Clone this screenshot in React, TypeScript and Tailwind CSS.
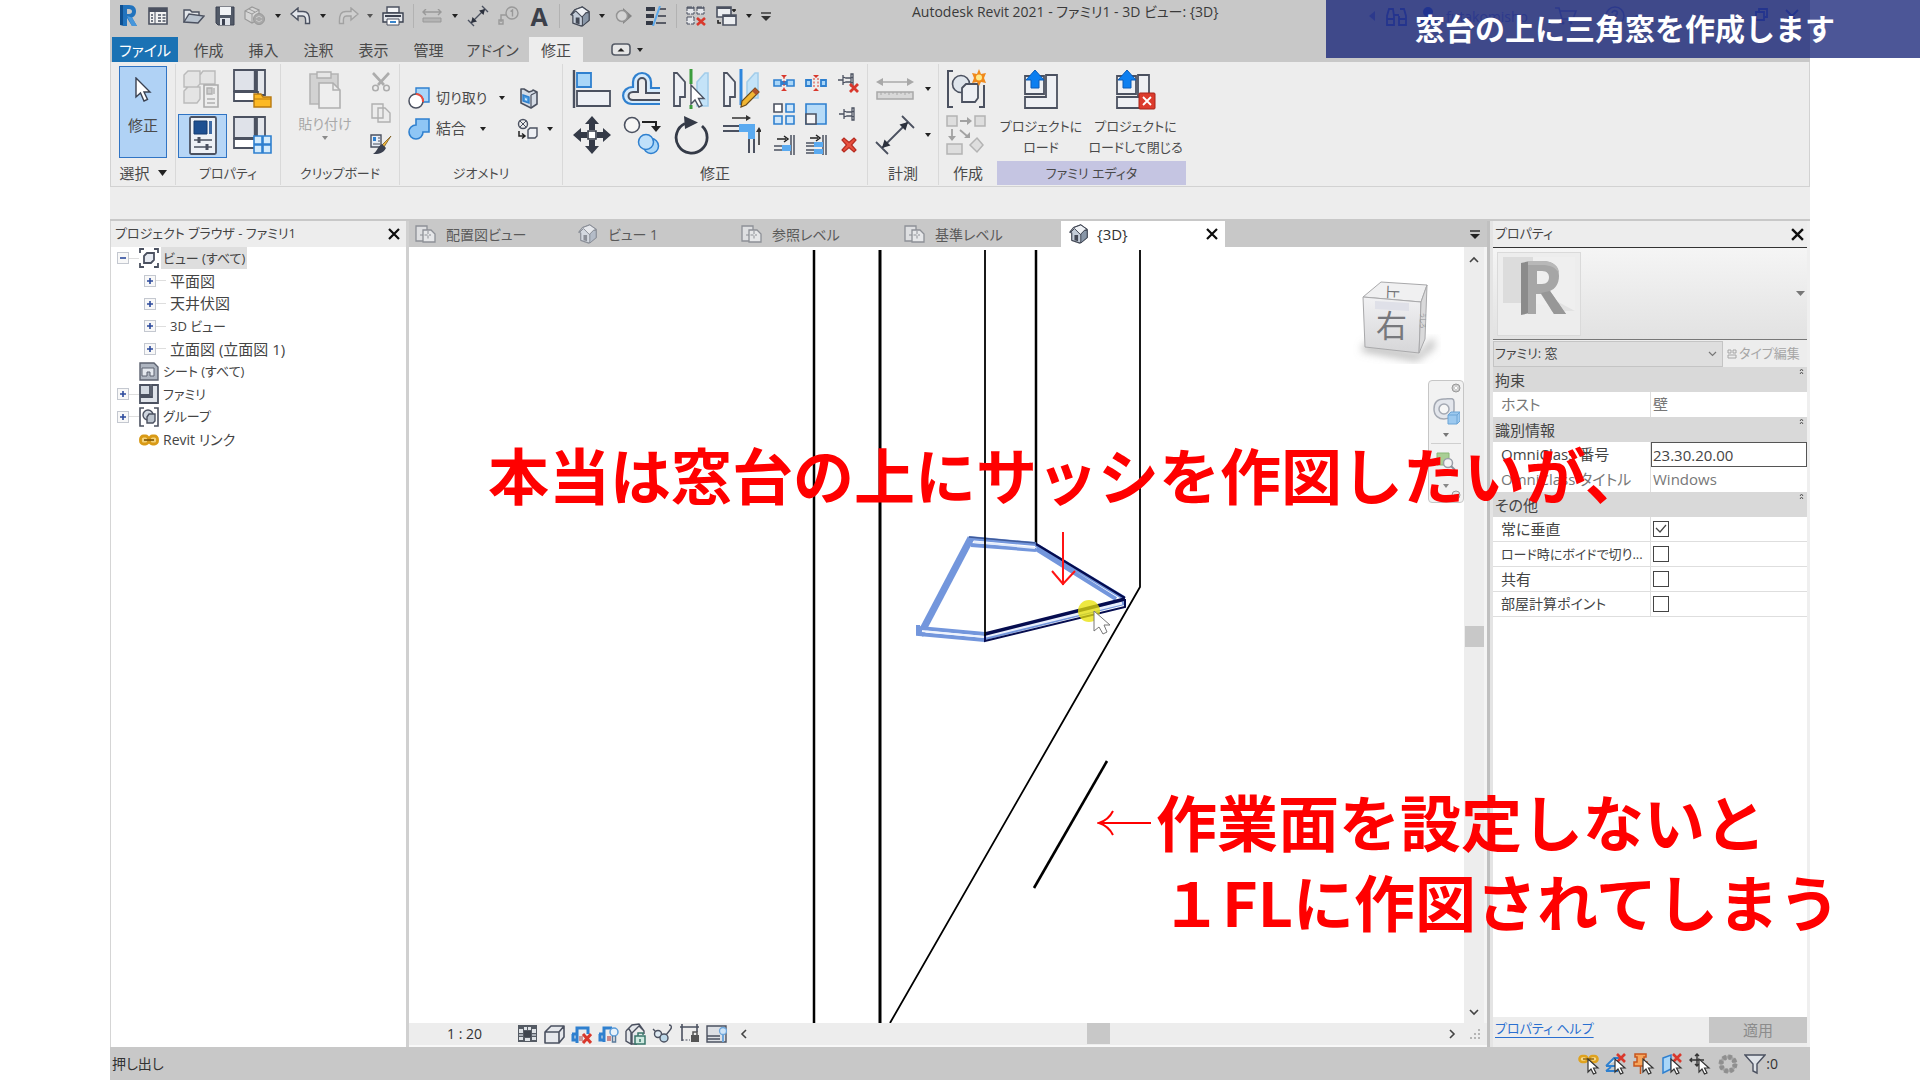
import React from "react";

type P = { children?: React.ReactNode };

const D = "#4b5160";
const F = "#eef0f4";
const B = "#2f80cf";
const LB = "#a9d6f8";

function Icon({ s = 40, w, h, children }: P & { s?: number; w?: number; h?: number }) {
  const ww = w ?? s;
  const hh = h ?? s;
  return (
    <svg width={ww} height={hh} viewBox={`0 0 ${ww} ${hh}`} fill="none" className="shrink-0" aria-hidden="true">
      {children}
    </svg>
  );
}

function Caret({ c = "#222" }: { c?: string }) {
  return (
    <svg width="6" height="4" viewBox="0 0 6 4" className="shrink-0" aria-hidden="true">
      <path d="M0 0h6L3 4z" fill={c} />
    </svg>
  );
}

function CaretBtn({ className = "", label, c }: { className?: string; label: string; c?: string }) {
  return (
    <button aria-label={label} className={`flex h-8 w-4 items-center justify-center ${className}`}>
      <Caret c={c} />
    </button>
  );
}

function Q({ label, className = "", children }: P & { label: string; className?: string }) {
  return (
    <button aria-label={label} className={`flex h-8 w-7 shrink-0 items-center justify-center ${className}`}>
      {children}
    </button>
  );
}

function House({ s = 22, mute = false }: { s?: number; mute?: boolean }) {
  const k = mute ? "#8b8f98" : "#434956";
  return (
    <svg width={s} height={s} viewBox="0 0 22 22" aria-hidden="true" strokeLinejoin="round" className="shrink-0">
      <path d="M1 9l4-5 8-3 7 5v9l-8 6-9-3V10z" fill={mute ? "#d3d8e0" : "#c3ccd8"} stroke={k} strokeWidth="1.3" />
      <path d="M1 9l4-5 8-3 7 5-3 1-4 5-7-7-4 4z" fill={mute ? "#e6e8ec" : "#eef1f5"} stroke={k} strokeWidth="1.1" />
      <path d="M13 11l4-4 3 0v8l-7 6z" fill={mute ? "#b4bcc8" : "#8997a8"} stroke={k} strokeWidth="1.1" />
      <path d="M6 12h4v7l-4-1z" fill={k} />
    </svg>
  );
}

function PlanIcon() {
  return (
    <Icon w={21} h={20}>
      <path d="M1 2h11v15H1z" fill="#dedfe1" stroke="#8d9096" strokeWidth="1.3" />
      <path d="M8 6h8l4 4v8H8z" fill="#e6e7e9" stroke="#8d9096" strokeWidth="1.3" />
      <path d="M5 11h11M13 7v9" stroke="#8d9096" strokeDasharray="3 1.5" />
    </Icon>
  );
}

function CloseX({ s = 12, w = 2.2 }: { s?: number; w?: number }) {
  return (
    <svg width={s} height={s} viewBox="0 0 12 12" aria-hidden="true">
      <path d="M1 1l10 10M11 1L1 11" stroke="#0d0d0d" strokeWidth={w} />
    </svg>
  );
}

function QuickAccess() {
  const sep = "h-6 w-px shrink-0 bg-[#b2b2b2]";
  return (
    <div className="flex h-[37px] items-start bg-[#c8c8c8] text-[14px] text-[#3a3a3a]">
      <Q label="Revit メニュー" className="ml-0.5 w-8">
        <Icon w={20} h={24}>
          <path d="M2 1h4v21l-4-1z" fill="#0f4f8f" />
          <path d="M5 1h6c5 0 7 3 7 6 0 4-2 6-4 6.500L19 22h-5l-5-8v8H5zM9 5v5h2c2 0 3-1 3-2.500S13 5 11 5z" fill="#2273bd" fillRule="evenodd" />
          <path d="M9 12l5 10h5l-5-8.500z" fill="#4796db" />
        </Icon>
      </Q>
      <Q label="ホーム">
        <Icon w={20} h={18}>
          <path d="M1 1h18v16H1z" fill="#f2f2f2" stroke={D} strokeWidth="1.6" />
          <path d="M1 1h18v4H1z" fill={D} />
          <path d="M7 5v12" stroke={D} />
          <path d="M3 8h2M3 11h2M3 14h2M10 8h3M10 11h3M10 14h3M14.500 8h3M14.500 11h3M14.500 14h3" stroke={D} strokeWidth="1.4" />
        </Icon>
      </Q>
      <Q label="開く" className="ml-2">
        <Icon w={22} h={18}>
          <path d="M1 15V3h6l2 2h7v4" fill="#e3e6ea" stroke={D} strokeWidth="1.4" />
          <path d="M1 15l5-8 15 2-6 7z" fill="#b9c3cf" stroke={D} strokeWidth="1.4" />
        </Icon>
      </Q>
      <Q label="保存" className="ml-[3px]">
        <Icon w={20} h={20}>
          <path d="M1 1h18v18H3l-2-2z" fill="#525a68" stroke="#3b4150" />
          <path d="M5 1h11v8H5z" fill="#f1f3f6" />
          <path d="M5 12h10v7H5z" fill="#dfe3ea" />
          <path d="M7 13h3v6H7z" fill="#3b4150" />
        </Icon>
      </Q>
      <Q label="同期" className="ml-0.5">
        <Icon w={22} h={20}>
          <path d="M1 5l7-4 7 3v9l-7 4-7-4z" fill="#d5d5d5" stroke="#999" strokeWidth="1.2" />
          <path d="M1 5l7 3 7-4M8 8v9M5 3l6 3" stroke="#999" />
          <circle cx="15" cy="13" r="5.5" fill="#a8a8a8" stroke="#999" />
          <path d="M12 12l3-2 3 2M18 14l-3 2-3-2" stroke="#ccc" />
        </Icon>
      </Q>
      <CaretBtn label="同期のオプション" className="ml-px" />
      <Q label="元に戻す" className="ml-px">
        <Icon w={22} h={18}>
          <path d="M1 7l7-6v3.500h5c5 0 7 3 6.500 12h-4c.5-6-.5-7.500-3-7.500H8V13z" fill="#e2e5ea" stroke={D} strokeWidth="1.4" />
        </Icon>
      </Q>
      <CaretBtn label="元に戻す履歴" />
      <Q label="やり直し" className="ml-[3px]">
        <Icon w={22} h={18}>
          <path d="M21 7l-7-6v3.500H9C4 4.500 2 7.500 2.500 16.500h4C6 10.500 7 9 9.500 9H14v4z" fill="#cfcfcf" stroke="#a2a2a2" strokeWidth="1.4" />
        </Icon>
      </Q>
      <CaretBtn label="やり直し履歴" c="#555" />
      <Q label="印刷" className="ml-px">
        <Icon w={22} h={20}>
          <path d="M5 1h12v6H5z" fill="#f4f5f7" stroke={D} strokeWidth="1.4" />
          <path d="M1 7h20v9H1z" fill="#e3e6ea" stroke="#3b4150" strokeWidth="1.4" />
          <path d="M3 9h16v2H3z" fill="#3b4150" />
          <path d="M5 13h12v6H5z" fill="#fff" stroke={D} />
          <path d="M8 16h6" stroke="#3a86cc" strokeWidth="2" />
        </Icon>
      </Q>
      <span className={`ml-1.5 mt-1 ${sep}`} />
      <Q label="計測" className="ml-1">
        <Icon w={20} h={14}>
          <path d="M1 3h18M4 0L1 3l3 3M16 0l3 3-3 3" stroke="#999" strokeWidth="1.4" />
          <path d="M1 9h18v4H1z" fill="#b4b4b4" stroke="#999" />
        </Icon>
      </Q>
      <CaretBtn label="計測のオプション" className="ml-px" />
      <Q label="平行寸法" className="ml-px">
        <Icon w={22} h={22}>
          <path d="M4 18L18 4M1 15l6 6M15 1l6 6" stroke={D} strokeWidth="1.4" />
          <path d="M4 18l1.500-6 4.500 4.500zM18 4l-6 1.500 4.500 4.500z" fill="#2c313d" />
        </Icon>
      </Q>
      <Q label="タグ" className="ml-[3px]">
        <Icon w={22} h={20}>
          <circle cx="14" cy="7" r="6" stroke="#999" strokeWidth="1.4" />
          <path d="M12.500 5.500l2-1.500v6.500M8 9H3v7M1 14h4v4H1z" stroke="#999" strokeWidth="1.4" />
        </Icon>
      </Q>
      <Q label="文字" className="ml-0.5">
        <span className="font-['Open_Sans',sans-serif] text-[25px] font-bold leading-8 text-[#3c404a]">A</span>
      </Q>
      <span className={`ml-1.5 mt-1 ${sep}`} />
      <Q label="既定の 3D ビュー" className="ml-1.5"><House s={21} /></Q>
      <CaretBtn label="3D ビューのオプション" />
      <Q label="断面">
        <Icon w={18} h={16}>
          <path d="M8 0l9 8-9 8z" fill="#858585" />
          <circle cx="7" cy="8" r="5.5" fill="#d4d4d4" stroke="#959595" strokeWidth="1.5" />
        </Icon>
      </Q>
      <Q label="細線" className="ml-1">
        <Icon w={22} h={20}>
          <path d="M1 3h9M1 10h8M1 17h7" stroke="#343945" strokeWidth="4" />
          <path d="M14 3h7M13 10h8M11 17h10" stroke="#343945" strokeWidth="1.4" />
          <path d="M15 0L8 20" stroke="#5aa8ec" strokeWidth="2" />
        </Icon>
      </Q>
      <span className={`ml-1.5 mt-1 ${sep}`} />
      <Q label="非表示を閉じる" className="ml-[5px]">
        <Icon w={20} h={20}>
          <path d="M1 1h7v7H1zM11 1h7v7h-7zM1 11h7v7H1z" fill="#e4e6ea" stroke={D} strokeDasharray="5 1" />
          <path d="M1 2h7M11 2h7" stroke={D} strokeWidth="1.6" />
          <path d="M11 12l8 7M19 12l-8 7" stroke="#d9382c" strokeWidth="2.6" />
        </Icon>
      </Q>
      <Q label="ウィンドウ切り替え" className="ml-[3px]">
        <Icon w={22} h={20}>
          <path d="M1 1h14v10H1z" fill="#eceef1" stroke={D} strokeWidth="1.6" />
          <path d="M7 9h13v10H7z" fill="#eceef1" stroke={D} strokeWidth="1.6" />
          <path d="M7 10h13M1 2h14" stroke={D} strokeWidth="2" />
          <path d="M18 6V3M16 4h4M2 14v3h3" stroke="#222" strokeWidth="1.6" />
        </Icon>
      </Q>
      <CaretBtn label="ウィンドウ一覧" />
      <button aria-label="クイック アクセスのカスタマイズ" className="ml-px flex h-8 w-4 items-center justify-center">
        <Icon w={10} h={9}>
          <path d="M0 1h10" stroke="#333" strokeWidth="1.4" />
          <path d="M0 4h10L5 9z" fill="#333" />
        </Icon>
      </button>
      <h1 className="ml-[138px] whitespace-nowrap leading-6">Autodesk Revit 2021 - ファミリ1 - 3D ビュー: {"{3D}"}</h1>
      <div className="ml-auto flex h-8 items-center text-[#7a86d0]">
        <Icon w={8} h={10}><path d="M7 0v10L1 5z" fill="#7a86d0" /></Icon>
        <Icon w={40} h={20}>
          <path d="M13 3h4l1 7v9h-7v-9zM24 3h4l2 7v9h-7v-9M18 9h5M11 13h7M23 13h7" stroke="#5870d8" strokeWidth="1.8" />
        </Icon>
        <Icon w={26} h={20}>
          <circle cx="12" cy="6" r="5" fill="#4a6fe0" />
          <path d="M3 18c2-5 4-7 9-7s7 2 9 7z" fill="#4a6fe0" />
        </Icon>
        <span className="w-[112px] pl-1">futakomisho</span>
        <Icon w={50} h={20}>
          <path d="M1 2h4l3 11h11l3-8H6" stroke="#7a86d0" strokeWidth="1.6" />
          <circle cx="9" cy="17" r="1.5" fill="#7a86d0" /><circle cx="17" cy="17" r="1.5" fill="#7a86d0" />
        </Icon>
        <Icon w={148} h={22}>
          <circle cx="11" cy="11" r="9" stroke="#7a86d0" strokeWidth="1.6" />
          <path d="M8 8c1-4 7-2 5 1-1 1-2 1.500-2 4M11 15v2" stroke="#7a86d0" strokeWidth="1.8" />
          <path d="M31 10h7l-3.500 4z" fill="#7a86d0" />
        </Icon>
        <Icon w={58} h={18}>
          <path d="M4 5h8v8H4zM7 5V2h8v8h-3M34 3l12 12M46 3L34 15" stroke="#5870d8" strokeWidth="1.8" />
        </Icon>
      </div>
    </div>
  );
}

function RibbonTabs() {
  const t = "h-[25px] w-[55px] text-center";
  return (
    <nav aria-label="リボン" className="flex h-[25px] bg-[#c8c8c8] pl-0.5 text-[15px] leading-[26px] text-[#4a4a4a]">
      <button className="h-[25px] w-[66px] bg-[#1a72b4] text-white">ファイル</button>
      <span className="w-[3px]" />
      <button className={t}>作成</button>
      <button className={t}>挿入</button>
      <button className={t}>注釈</button>
      <button className={t}>表示</button>
      <button className={t}>管理</button>
      <button className="h-[25px] w-[73px] text-center">アドイン</button>
      <button aria-current="page" className="h-[25px] w-[54px] bg-[#ededed] text-center">修正</button>
      <button aria-label="リボンを最小化" className="ml-7 flex items-center gap-1.5">
        <Icon w={20} h={13}>
          <rect x="1" y="1" width="18" height="11" rx="3" fill="#e6e6e6" stroke="#555b66" strokeWidth="1.6" />
          <path d="M6.500 8.500h7L10 5z" fill="#222" />
        </Icon>
        <Caret />
      </button>
    </nav>
  );
}

function Panel({ label, className = "", footer = "text-[15px]", children }: P & { label: React.ReactNode; className?: string; footer?: string }) {
  return (
    <section className={`flex h-[121px] shrink-0 flex-col ${className}`}>
      <div className="h-[97px]">{children}</div>
      <div className={`h-6 text-center leading-6 ${footer}`}>{label}</div>
    </section>
  );
}

function Boxes({ children }: P) {
  return (
    <Icon s={40}>
      <path d="M1 1h22v21H1z" fill="#dfe2e9" stroke={D} strokeWidth="1.8" />
      <path d="M24 1h8v25h-8z" fill="#e4e7ec" stroke={D} strokeWidth="1.8" />
      <path d="M1 23h24v9H1z" fill="#fff" stroke={D} strokeWidth="1.8" />
      <path d="M22 1v21" stroke={D} strokeWidth="2.4" />
      {children}
    </Icon>
  );
}

function Tool({ label, children }: P & { label: string }) {
  return <button aria-label={label} className="flex items-center justify-center">{children}</button>;
}

function Ribbon() {
  const rb = "border-r border-[#d9d9d9]";
  return (
    <div className="flex h-[125px] border border-t-0 border-[#d2d2d2] bg-[#ededed] pt-[2px] text-[15px] text-[#4a4a4a]">
      <Panel className={`w-[65px] ${rb}`} label={<span className="inline-flex items-center gap-2">選択 <Icon w={9} h={6}><path d="M0 0h9L4.500 6z" fill="#222" /></Icon></span>}>
        <button className="ml-2 mt-0.5 flex h-[92px] w-12 flex-col items-center border border-[#3074c4] bg-[#b0d2f5]">
          <span className="mt-2.5">
            <Icon w={20} h={28}>
              <path d="M3 1v19l4.500-4 3.500 8 3.500-1.500-3.500-7.500h6z" fill="#fff" stroke="#3a4150" strokeWidth="1.4" />
            </Icon>
          </span>
          <span className="mt-2 leading-6">修正</span>
        </button>
      </Panel>
      <Panel className={`w-[105px] ${rb}`} footer="text-[13px]" label="プロパティ">
        <div className="grid h-[96px] grid-cols-2 pl-px pr-0.5 pt-0.5">
          <Tool label="タイプ プロパティ">
            <Icon s={40}>
              <path d="M2 6l4-4h12v13l-3 3H2zM18 6l3-4h12v13h-15zM2 22l4-4h12v12l-3 4H2z" fill="#e4e4e4" stroke="#bababa" strokeWidth="1.4" />
              <path d="M22 16h14v22H22z" fill="#ededed" stroke="#ababab" strokeWidth="1.6" />
              <path d="M25 19h5v6h-5zM32 19v6M25 30h8M25 34h8" fill="#ccc" stroke="#b0b0b0" strokeWidth="1.4" />
            </Icon>
          </Tool>
          <Tool label="ファミリ カテゴリ">
            <Boxes>
              <path d="M21 27V25h7l2 3h8v10H21z" fill="#fdb924" stroke="#b87a10" strokeWidth="1.4" />
              <path d="M21 30h17" stroke="#b87a10" />
            </Boxes>
          </Tool>
          <button aria-label="プロパティ" className="ml-px flex h-11 w-[49px] items-center justify-center self-center border border-[#3074c4] bg-[#b7d6f6]">
            <Icon w={28} h={40}>
              <rect x="1" y="1" width="26" height="37" rx="1.5" fill="#eef1f6" stroke={D} strokeWidth="1.8" />
              <path d="M5 5h13v13H5z" fill="#1d4f91" stroke="#143a6e" />
              <path d="M20 5h3v13h-3z" fill="#3f6ba6" />
              <path d="M5 24h18M5 31h18" stroke={D} strokeWidth="1.6" />
              <path d="M10 21v6M18 28v6" stroke={D} strokeWidth="3" />
            </Icon>
          </button>
          <Tool label="ファミリ タイプ">
            <Boxes>
              <path d="M21 20h8v8h-8zM30 20h8v8h-8zM21 29h8v8h-8zM30 29h8v8h-8z" fill="#d3ebfc" stroke={B} strokeWidth="1.6" />
            </Boxes>
          </Tool>
        </div>
      </Panel>
      <Panel className={`w-[119px] ${rb}`} footer="text-[13px]" label="クリップボード">
        <div className="flex">
          <button className="ml-4 flex w-14 flex-col items-center pt-1.5 text-[14px] text-[#a9a9a9]">
            <Icon w={34} h={40}>
              <path d="M2 4h28v30H2z" fill="#d2d2d2" stroke="#b5b5b5" strokeWidth="1.6" />
              <path d="M9 2h14v6H9z" fill="#e6e6e6" stroke="#b0b0b0" strokeWidth="1.4" />
              <path d="M11 13h14l7 7v18H11z" fill="#eeeeee" stroke="#b0b0b0" strokeWidth="1.6" />
              <path d="M25 13v7h7" stroke="#b0b0b0" strokeWidth="1.4" />
            </Icon>
            <span className="mt-0.5 whitespace-nowrap leading-6">貼り付け</span>
            <Caret c="#8a8a8a" />
          </button>
          <div className="ml-4 grid h-[96px] w-6 grid-rows-3 pt-0.5">
            <Tool label="切り取り">
              <Icon w={20} h={20}>
                <path d="M2 1l11 12M18 1L7 13" stroke="#adadad" strokeWidth="2.6" />
                <circle cx="4.5" cy="16" r="2.8" stroke="#adadad" strokeWidth="1.5" /><circle cx="15.5" cy="16" r="2.8" stroke="#adadad" strokeWidth="1.5" />
              </Icon>
            </Tool>
            <Tool label="コピー">
              <Icon w={22} h={22}>
                <path d="M2 2h11v14H2zM8 6h7l5 5v9H8z" fill="#ececec" stroke="#b0b0b0" strokeWidth="1.4" />
              </Icon>
            </Tool>
            <Tool label="タイプのプロパティの一致">
              <Icon w={22} h={22}>
                <path d="M1 2h10v12H1z" fill="#e8eef6" stroke={D} strokeWidth="1.4" />
                <path d="M3 4h3v4H3z" fill={B} /><path d="M8 5h2M8 8h2M3 11h7" stroke={D} />
                <path d="M21 3l-9 9 2 2z" fill="#f0b840" stroke="#7a5a20" strokeWidth=".8" />
                <path d="M12 11l4 4c-3 6-8 6-13 6 4-2 4-7 9-10z" fill="#3b4150" />
              </Icon>
            </Tool>
          </div>
        </div>
      </Panel>
      <Panel className={`w-[163px] ${rb}`} footer="text-[13px]" label="ジオメトリ">
        <div className="grid grid-cols-[103px_1fr] grid-rows-[31px_31px] pl-2 pt-[18px] text-[14px]">
          <button className="flex items-center gap-1.5">
            <Icon w={22} h={22}>
              <path d="M8 1h13v14H8z" fill={LB} stroke={B} strokeWidth="1.4" />
              <circle cx="8" cy="14" r="7" fill="#fff" stroke={D} strokeWidth="1.5" />
              <path d="M8 7a7 7 0 0 1 7 8" stroke="#ee4b3c" strokeWidth="2" />
            </Icon>
            <span className="whitespace-nowrap">切り取り</span><span className="ml-1.5"><Caret /></span>
          </button>
          <button aria-label="面を分割" className="flex items-center pl-2">
            <Icon w={19} h={22}>
              <path d="M2 2h3l5 3 3-1 1-1 4 2v12l-6 4-10-5z" fill="#d5dce6" stroke={D} strokeWidth="1.6" strokeLinejoin="round" />
              <path d="M12 8v12M12 8l6-3" stroke={D} strokeWidth="1.2" />
              <path d="M4 8l6 2v6l-6-2z" fill="#4f9fe2" stroke={B} strokeWidth="1.4" />
              <path d="M6 11l2 .7v2L6 13z" fill="#cfe7fb" />
            </Icon>
          </button>
          <button className="flex items-center gap-1.5">
            <Icon w={22} h={22}>
              <path d="M8 1h13v13h-6a7 7 0 1 1-7-7z" fill="#8fc6f5" stroke={B} strokeWidth="1.6" />
            </Icon>
            <span className="text-[15px]">結合</span><span className="ml-2"><Caret /></span>
          </button>
          <button aria-label="ペイント" className="flex items-center gap-2 pl-1.5">
            <Icon w={22} h={22}>
              <circle cx="6" cy="6" r="4.5" stroke={D} strokeWidth="1.4" /><path d="M3 3l6 6M9 3L3 9" stroke={D} />
              <path d="M2 13v5h5M5 15.500l3 2.500-3 2.500" stroke="#222" strokeWidth="1.5" />
              <path d="M11 12l2-2h7v8l-2 2h-7z" fill={F} stroke={D} strokeWidth="1.4" />
            </Icon>
            <Caret />
          </button>
        </div>
      </Panel>
      <Panel className={`w-[305px] ${rb}`} label="修正">
        <div className="flex">
          <div className="grid h-[94px] w-[203px] grid-cols-4 pl-1 pt-0.5">
            <Tool label="位置合わせ ">
              <Icon s={40}>
                <path d="M2 1v38" stroke={D} strokeWidth="2.4" />
                <path d="M5 4h14v14H5z" fill={LB} stroke={B} strokeWidth="1.8" />
                <path d="M5 22h33v15H5z" fill={F} stroke={D} strokeWidth="1.8" />
              </Icon>
            </Tool>
            <Tool label="オフセット">
              <Icon s={40}>
                <path d="M38 19h-9v-6a9 9 0 0 0-18 0v5C-2 18-2 35 10 35h28" stroke={B} strokeWidth="2.2" fill="#d6ebfc" />
                <path d="M38 24H24V13a4 4 0 0 0-8 0v10h-5c-6 0-6 8 0 8h27" stroke={D} strokeWidth="2" fill="#ededed" />
              </Icon>
            </Tool>
            <Tool label="鏡像化 - 軸を選択">
              <Icon s={40}>
                <path d="M3 4h3l8 9v15h-5v9H3z" fill={F} stroke={D} strokeWidth="1.8" />
                <path d="M37 4h-3l-8 9v24h11z" fill="#c4e3f8" stroke="#a3cdea" strokeWidth="1.6" />
                <path d="M20 0v15M20 36v4" stroke="#3c9d3c" strokeWidth="3" />
                <path d="M20 16v19l4-4 4 7 3-1.500-3.500-7H33z" fill="#fff" stroke={D} strokeWidth="1.4" />
              </Icon>
            </Tool>
            <Tool label="鏡像化 - 軸を描画">
              <Icon s={40}>
                <path d="M3 4h3l8 9v15h-5v9H3z" fill={F} stroke={D} strokeWidth="1.8" />
                <path d="M37 4h-3l-8 9v16h11z" fill="#c4e3f8" stroke="#a3cdea" strokeWidth="1.6" />
                <path d="M20 0v36" stroke="#2f86dd" strokeWidth="3" />
                <path d="M34 19l4 4-13 13-5 2 1-6z" fill="#f2b632" stroke="#6b4c1c" strokeWidth="1.2" />
                <path d="M34 19l4 4-3 3-4-4z" fill="#b0532a" />
              </Icon>
            </Tool>
            <Tool label="移動">
              <Icon s={40}>
                <path d="M20 1l7 8h-4v6h-6V9h-4zM20 39l7-8h-4v-6h-6v6h-4zM1 20l8-7v4h6v6H9v4zM39 20l-8-7v4h-6v6h6v4z" fill="#343a47" />
                <path d="M16 16h8v8h-8z" fill="#fff" stroke="#343a47" strokeWidth="1.6" />
              </Icon>
            </Tool>
            <Tool label="コピー">
              <Icon s={40}>
                <circle cx="10" cy="10" r="7.5" fill="#f6f6f6" stroke={D} strokeWidth="1.6" />
                <path d="M20 7h14v6" stroke="#222" strokeWidth="2" /><path d="M29 11h10l-5 6z" fill="#222" />
                <circle cx="29" cy="31" r="7.5" fill={LB} stroke={B} strokeWidth="1.5" />
                <circle cx="24" cy="27" r="7.5" fill="#bfe0fa" stroke={B} strokeWidth="1.5" />
              </Icon>
            </Tool>
            <Tool label="回転">
              <Icon s={40}>
                <path d="M14 8.500A15.500 15.500 0 1 0 31 11" stroke="#343a47" strokeWidth="2.8" />
                <path d="M13 1l14 6.500L14 14z" fill="#343a47" />
              </Icon>
            </Tool>
            <Tool label="コーナーへトリム/延長">
              <Icon s={40}>
                <path d="M2 11h16M2 16h16M28 24v14M33 24v14" stroke={D} strokeWidth="2" />
                <path d="M18 9h16v15h-7v-7h-9z" fill="#5aaaf0" />
                <path d="M11 3h15M38 30V15" stroke="#333" strokeWidth="1.6" /><path d="M25 0l5 3-5 3zM35 17l3-5 3 5z" fill="#333" />
              </Icon>
            </Tool>
          </div>
          <div className="ml-0.5 grid h-[96px] w-[97px] grid-cols-3 grid-rows-3 pt-[3px]">
            <Tool label="要素を分割">
              <Icon w={22} h={16}><path d="M1 5h7v6H1zM14 5h7v6h-7z" fill={LB} stroke={B} strokeWidth="1.6" /><path d="M8 6h6v4H8z" fill={B} /><path d="M11 2v12" stroke="#d9382c" strokeDasharray="2 1.5" /><path d="M8 0h6l-3 3zM8 16h6l-3-3z" fill="#d9382c" /></Icon>
            </Tool>
            <Tool label="隙間で分割">
              <Icon w={22} h={16}><path d="M1 5h5v6H1zM16 5h5v6h-5z" fill={LB} stroke={B} strokeWidth="1.8" /><path d="M9 3v10M13 3v10" stroke="#d9382c" strokeDasharray="2 1.5" /><path d="M8 0h6l-3 3zM8 16h6l-3-3z" fill="#d9382c" /></Icon>
            </Tool>
            <Tool label="ピン解除">
              <Icon w={22} h={22}><path d="M0 8h5M5 3v10M5 5l3 1h5l2-1M5 11l3-1h5l2 1M15 2v12h-2V2z" stroke={D} strokeWidth="1.3" /><path d="M12 12l8 8M20 12l-8 8" stroke="#d9382c" strokeWidth="2.8" /></Icon>
            </Tool>
            <Tool label="配列">
              <Icon w={22} h={22}><path d="M1 1h8v8H1z" fill="#fff" stroke={D} strokeWidth="1.6" /><path d="M13 1h8v8h-8zM1 13h8v8H1zM13 13h8v8h-8z" fill="#cfe7fb" stroke={B} strokeWidth="1.6" /></Icon>
            </Tool>
            <Tool label="尺度">
              <Icon w={22} h={22}><path d="M1 1h20v20H1z" fill="#b6dbf8" stroke={B} strokeWidth="1.6" /><path d="M1 11h10v10H1z" fill="#f4f4f6" stroke={D} strokeWidth="1.6" /></Icon>
            </Tool>
            <Tool label="ピン">
              <Icon w={22} h={16}><path d="M1 8h5M6 3v10M6 5l3 1h5l2-1M6 11l3-1h5l2 1M16 2v12h-2V2z" stroke={D} strokeWidth="1.3" /></Icon>
            </Tool>
            <Tool label="単一要素をトリム/延長">
              <Icon w={22} h={22}><path d="M1 12h9M1 16h9M18 1v20M21 1v20" stroke={D} strokeWidth="1.5" /><path d="M9 11h9v6H9z" fill="#5aaaf0" /><path d="M4 5h9M11 2l4 3-4 3" stroke="#222" strokeWidth="1.5" /></Icon>
            </Tool>
            <Tool label="複数要素をトリム/延長">
              <Icon w={22} h={22}><path d="M1 9h9M1 12h9M1 16h9M1 19h9M18 1v20M21 1v20" stroke={D} strokeWidth="1.5" /><path d="M9 8h9v5H9zM9 15h9v5H9z" fill="#5aaaf0" /><path d="M5 4h8M11 1l4 3-4 3" stroke="#222" strokeWidth="1.5" /></Icon>
            </Tool>
            <Tool label="削除">
              <Icon w={18} h={18}><path d="M2 4l2-2 5 4.500L14 2l2 2-4.500 5 4.500 5-2 2-5-4.500L4 16l-2-2 4.500-5z" fill="#e8503e" stroke="#b52a20" strokeWidth="1.2" /></Icon>
            </Tool>
          </div>
        </div>
      </Panel>
      <Panel className={`w-[71px] ${rb}`} label="計測">
        <div className="grid h-[94px] grid-cols-[54px_1fr] pr-1 pt-0.5">
          <Tool label="計測">
            <Icon s={40}>
              <path d="M3 13h34" stroke="#a8a8a8" strokeWidth="1.6" /><path d="M1 13l7-4v8zM39 13l-7-4v8z" fill="#a8a8a8" />
              <path d="M2 23h36v7H2z" fill="#d8d8d8" stroke="#a8a8a8" strokeWidth="1.5" /><path d="M6 23v3M10 23v2M14 23v3M18 23v2M22 23v3M26 23v2M30 23v3M34 23v2" stroke="#a8a8a8" />
            </Icon>
          </Tool>
          <Tool label="計測のオプション"><Caret /></Tool>
          <Tool label="平行寸法">
            <Icon s={40}>
              <path d="M7 33L33 7M1 27l12 12M27 1l12 12" stroke={D} strokeWidth="1.8" />
              <path d="M7 33l2.500-8.500 6 6zM33 7l-8.500 2.500 6 6z" fill="#2c313d" />
            </Icon>
          </Tool>
          <Tool label="寸法のオプション"><Caret /></Tool>
        </div>
      </Panel>
      <Panel className="w-[58px]" label="作成">
        <div className="grid h-[94px] pr-1 pt-0.5">
          <Tool label="グループを作成">
            <Icon s={40}>
              <path d="M7 2H2v36h5M33 38h5V16" stroke={D} strokeWidth="2" />
              <circle cx="15" cy="15" r="8.5" fill="#dfe5ec" stroke={D} strokeWidth="1.6" />
              <path d="M16 19l4-4h12v14l-3 4H16z" fill={F} stroke={D} strokeWidth="1.8" />
              <path d="M33 0l2 5 5-1-2 5 2 5-5-1-2 4-2-4-5 1 2-5-2-5 5 1z" fill="#f08a1c" /><circle cx="33" cy="8.5" r="3" fill="#ffe98a" />
            </Icon>
          </Tool>
          <Tool label="類似オブジェクトを作成">
            <Icon s={40}>
              <path d="M1 1h10v10H1zM29 1h10v10H29zM1 29h15v10H1zM31 23l6 7-6 7-7-7z" fill="#dedede" stroke="#b4b4b4" strokeWidth="1.5" />
              <path d="M14 6h8M6 14v8M14 15l7 6" stroke="#a2a2a2" strokeWidth="1.8" /><path d="M21 2l5 4-5 4zM2 21l4 5 4-5zM18 23h6v-6z" fill="#a2a2a2" />
            </Icon>
          </Tool>
        </div>
      </Panel>
      <Panel className="w-[189px]" label="ファミリ エディタ" footer="bg-[#c5c5e2] text-[13px]">
        <div className="flex h-[94px] whitespace-nowrap text-[13px] leading-[21px]">
          <button className="flex w-[88px] flex-col items-center pt-1.5">
            <Icon w={34} h={42}>
              <path d="M22 5h11v33H1V27h21z" fill={F} stroke={D} strokeWidth="1.8" /><path d="M1 6h19v18H1z" fill={F} stroke={D} strokeWidth="1.8" />
              <path d="M11 0l9 10h-5v8H7v-8H2z" fill="#0c7ff0" stroke="#0a5cb8" />
            </Icon>
            <span className="mt-1">プロジェクトに<br />ロード</span>
          </button>
          <button className="flex w-[101px] flex-col items-center pt-1.5">
            <Icon w={40} h={42}>
              <path d="M22 5h11v22H22zM1 27h28v11H1z" fill={F} stroke={D} strokeWidth="1.8" /><path d="M1 6h19v18H1z" fill={F} stroke={D} strokeWidth="1.8" />
              <path d="M11 0l9 10h-5v8H7v-8H2z" fill="#0c7ff0" stroke="#0a5cb8" />
              <rect x="23" y="23" width="16" height="16" rx="1" fill="#dc3b2c" stroke="#a8241a" /><path d="M27 27l8 8M35 27l-8 8" stroke="#fff" strokeWidth="1.8" />
            </Icon>
            <span className="mt-1">プロジェクトに<br />ロードして閉じる</span>
          </button>
        </div>
      </Panel>
    </div>
  );
}

function Expander({ open = false, label }: { open?: boolean; label: string }) {
  return (
    <button aria-label={label} aria-expanded={open} className="flex h-3 w-3 shrink-0 items-center justify-center border border-[#c4c8d0] bg-[#f8f8f8]">
      <Icon w={8} h={8}><path d={open ? "M1 4h6" : "M1 4h6M4 1v6"} stroke="#2c4a9c" strokeWidth="1.6" /></Icon>
    </button>
  );
}

function ProjectBrowser() {
  const row = "flex items-center text-[13px]";
  const dash = "h-px w-2.5 shrink-0 bg-[#dedede]";
  const kids = [
    { t: "平面図", c: "ml-1 text-[15px]" },
    { t: "天井伏図", c: "ml-1 text-[15px]" },
    { t: "3D ビュー", c: "ml-1 text-[13px]" },
    { t: "立面図 (立面図 1)", c: "ml-1 text-[15px]" },
  ];
  return (
    <aside className="flex w-[296px] shrink-0 flex-col border-l border-[#d5d5d5] bg-white text-[#444]">
      <div className="flex h-[26px] items-center justify-between bg-[#ededed] pl-1 pr-1.5">
        <h2 className="text-[13px]">プロジェクト ブラウザ - ファミリ1</h2>
        <button aria-label="ブラウザを閉じる"><CloseX /></button>
      </div>
      <ul className="grid h-[204px] auto-rows-fr pl-1.5">
        <li className={row}>
          <Expander open label="ビューを折りたたむ" /><span className={dash} />
          <Icon w={20} h={20}>
            <path d="M5 1H1v4M15 1h4v4M1 15v4h4M19 15v4h-4" stroke={D} strokeWidth="1.8" />
            <path d="M5 8l3-3h7v7l-3 3H5z" fill="#e7ebf2" stroke={D} strokeWidth="1.8" />
          </Icon>
          <span className="ml-0.5 bg-[#dedede] px-0.5 leading-[22px]">ビュー (すべて)</span>
        </li>
        {kids.map((k) => (
          <li key={k.t} className="flex items-center pl-[27px]">
            <Expander label={`${k.t}を展開`} /><span className={dash} />
            <span className={k.c}>{k.t}</span>
          </li>
        ))}
        <li className="flex items-center pl-[22px] text-[13px]">
          <Icon w={20} h={19}>
            <path d="M1 1h14l4 4v13H1z" fill="#aeb5c0" stroke="#5d6370" strokeWidth="1.4" /><path d="M3 6h12v8h-4v-4H8v4H3z" fill="#e4e8ee" stroke="#5d6370" />
          </Icon>
          <span className="ml-1">シート (すべて)</span>
        </li>
        <li className={row}>
          <Expander label="ファミリを展開" /><span className={dash} />
          <Icon w={20} h={20}>
            <path d="M13 1h6v18H1v-6h12z" fill="#e0e4ea" stroke={D} strokeWidth="1.8" /><path d="M1 1h10v10H1z" fill="#d3d9e1" stroke={D} strokeWidth="1.8" />
          </Icon>
          <span className="ml-1">ファミリ</span>
        </li>
        <li className={row}>
          <Expander label="グループを展開" /><span className={dash} />
          <Icon w={20} h={20}>
            <path d="M5 1H1v18h4M15 1h4v18h-4" stroke={D} strokeWidth="1.6" />
            <circle cx="9" cy="8" r="5" fill="#cfd6df" stroke={D} strokeWidth="1.4" /><path d="M8 10l2-3h6v7l-2 2H8z" fill="#bcc4ce" stroke={D} strokeWidth="1.4" />
          </Icon>
          <span className="ml-1">グループ</span>
        </li>
        <li className="flex items-center pl-[22px] text-[14px]">
          <Icon w={20} h={12}>
            <rect x="1.5" y="2" width="8" height="8" rx="3" fill="#f4d27a" stroke="#d99a16" strokeWidth="2.8" /><rect x="10.5" y="2" width="8" height="8" rx="3" fill="#f4d27a" stroke="#d99a16" strokeWidth="2.8" />
            <path d="M5 6h10" stroke="#8b5f0a" strokeWidth="1.8" />
          </Icon>
          <span className="ml-1">Revit リンク</span>
        </li>
      </ul>
    </aside>
  );
}

function ModelDrawing() {
  return (
    <svg viewBox="0 0 1055 776" className="h-full w-full" aria-label="3D モデル" role="img">
      <g stroke="#000" fill="none">
        <path d="M405 3v773" strokeWidth="2.5" />
        <path d="M471 3v773" strokeWidth="3" />
        <path d="M627 3v294" strokeWidth="2.5" />
        <path d="M731 3v337L481 776" strokeWidth="1.8" />
        <path d="M698 514L625 641" strokeWidth="2.6" />
      </g>
      <g fill="none" stroke="#7396dc" strokeWidth="4">
        <path d="M511 388l51-97" strokeWidth="7" />
        <path d="M576 387l-66-6M576 393l-67-6v-9" />
        <path d="M560 291l67 6M562 298l65 5" />
        <path d="M627 302l80 50M627 298l88 53" />
        <path d="M576 391l139-35" />
      </g>
      <path d="M565 295l61 6" stroke="#e4ecfb" strokeWidth="2" />
      <path d="M513 384l63 6" stroke="#eef3fd" strokeWidth="2" />
      <path d="M577 389l136-33" stroke="#e9effc" strokeWidth="3" />
      <path d="M560 290l67 6" stroke="#3f5a98" strokeWidth="1.5" />
      <path d="M576 387l140-35" stroke="#050c4f" strokeWidth="3.6" />
      <path d="M576 387v7l140-34v-8" stroke="#050c4f" strokeWidth="2" fill="none" />
      <path d="M627 297l89 54" stroke="#050c4f" strokeWidth="2.4" />
      <path d="M576 3v386" stroke="#000" strokeWidth="1.8" />
      <g stroke="#ff1414" strokeWidth="2" fill="none">
        <path d="M654 285v53M643 324l11 13 12-13" />
      </g>
      <circle cx="680" cy="364" r="11" fill="#e8e000" fillOpacity=".75" />
      <path d="M685 364v20l5-4 4 7 4-2-3-7h6z" fill="#fff" stroke="#777" strokeWidth="1" />
    </svg>
  );
}

function ViewCube() {
  return (
    <svg width="90" height="100" viewBox="0 0 90 100" className="absolute right-[23px] top-[20px]" role="img" aria-label="ビューキューブ">
      <defs>
        <filter id="soft"><feGaussianBlur stdDeviation="4" /></filter>
        <linearGradient id="face" x1="0" y1="0" x2="0" y2="1"><stop offset="0" stopColor="#f1f1f3" /><stop offset="1" stopColor="#d6d6d8" /></linearGradient>
      </defs>
      <path d="M14 76l54 10 14-16 2 10-18 14-56-10z" fill="#8c8c8c" fillOpacity=".6" filter="url(#soft)" />
      <g stroke="#a9a9ab" strokeWidth="1" strokeLinejoin="round">
        <path d="M12 30l18-15 46 3-6 17z" fill="#f0f0f1" />
        <path d="M12 30l58 5-2 51-54-6z" fill="url(#face)" />
        <path d="M70 35l6-17-2 54-6 14z" fill="#d9d9da" />
      </g>
      <path d="M24 34l34 2v8l-34-2z" fill="#dfe0e8" />
      <text x="25" y="70" fontSize="31" fill="#77787c">右</text>
      <text x="0" y="0" fontSize="14" fill="#707174" transform="translate(37 18) rotate(92)">上</text>
      <text x="0" y="0" fontSize="6" fill="#909194" transform="translate(70 46) rotate(90)">うしろ</text>
    </svg>
  );
}

function NavBar() {
  return (
    <div className="absolute right-0 top-[133px] flex h-[123px] w-9 flex-col items-center rounded border border-[#c6c6c6] bg-[#f2f2f2]">
      <button aria-label="ナビゲーションバーを閉じる" className="mr-0.5 mt-0.5 self-end">
        <Icon w={10} h={10}><circle cx="5" cy="5" r="4" fill="#ccc" stroke="#999" /><path d="M3.500 3.500l3 3M6.500 3.500l-3 3" stroke="#fff" /></Icon>
      </button>
      <button aria-label="ステアリング ホイール" className="mt-1 flex flex-col items-center gap-2">
        <Icon w={28} h={28}>
          <path d="M12 2c5 0 10-2 10 3v8c0 6-5 9-10 9S2 19 2 12 6 2 12 2z" fill="#e3e6ec" stroke="#a4a9b3" strokeWidth="1.5" />
          <circle cx="12" cy="12" r="5" fill="#f6f6f6" stroke="#a4a9b3" strokeWidth="1.5" />
          <path d="M16 18l3-3h9v9l-3 3h-9z" fill="#9cc9ef" stroke="#6da5d6" /><path d="M16 18h9v9M25 18l3-3" stroke="#6da5d6" />
        </Icon>
        <Caret c="#777" />
      </button>
      <span className="mt-1.5 h-px w-[30px] shrink-0 bg-[#cfcfcf]" />
      <button aria-label="ズーム" className="mt-2 flex flex-col items-center gap-3">
        <Icon w={20} h={20}>
          <path d="M1 1h12v12H1z" fill="#a9cf94" stroke="#8ab876" /><circle cx="12" cy="11" r="4.5" fill="#f4f4f4" stroke="#9a9fa8" strokeWidth="1.5" /><path d="M15 14l4 4" stroke="#8a8f98" strokeWidth="2" />
        </Icon>
        <Caret c="#888" />
      </button>
      <button aria-label="ナビゲーションバーのオプション" className="mb-0.5 mr-0.5 mt-auto self-end">
        <Icon w={10} h={10}><circle cx="5" cy="5" r="4" fill="#e6e6e6" stroke="#999" /><path d="M3 5h4" stroke="#999" /></Icon>
      </button>
    </div>
  );
}

function Chevron({ d }: { d: string }) {
  return <Icon w={10} h={10}><path d={d} stroke="#444" strokeWidth="1.6" /></Icon>;
}

function ViewControls() {
  return (
    <div className="flex h-[22px] items-center bg-[#ededed] text-[#333]">
      <span className="w-[108px] shrink-0 pl-[38px] text-[14px] leading-[22px]">1 : 20</span>
      <div className="flex shrink-0 items-center gap-[6px]">
        <Tool label="詳細レベル">
          <Icon w={21} h={20}>
            <path d="M1 1h19v17H1z" fill="#555b64" />
            <path d="M2 5h4v4H2zM15 5h4v4h-4zM2 13h4v3H2zM15 13h4v3h-4zM7 3h3v3H7zM11 3h3v3h-3zM8 14h5v3H8z" fill="#dfe3e7" />
            <path d="M7 7h7v6H7z" fill="#3f454e" /><path d="M2 10h4v2H2zM15 10h4v2h-4z" fill="#aab0b8" />
          </Icon>
        </Tool>
        <Tool label="表示スタイル"><Icon w={21} h={20}><path d="M1 8l6-6h13l-5 6zM1 8h14v11H1zM15 8l5-6v11l-5 6z" fill="#e6e8ec" stroke={D} strokeWidth="1.6" strokeLinejoin="round" /></Icon></Tool>
        <Tool label="トリミング領域"><Icon w={21} h={20}><path d="M6 19V4h11v6M1 10h5M2 10v6h4" stroke={B} strokeWidth="3" /><path d="M8 12h4v5H8z" fill="#c99" /><path d="M12 10l8 9M20 10l-8 9" stroke="#d9382c" strokeWidth="3" /></Icon></Tool>
        <Tool label="トリミング領域を表示"><Icon w={21} h={20}><path d="M6 18V4h8M1 10h5M2 10v6h4" stroke={B} strokeWidth="3" /><path d="M9 12h4v5H9z" fill="#c88" /><circle cx="16" cy="8" r="4" fill="#e8f2fb" stroke="#5a9bd8" strokeWidth="1.5" /><path d="M14.500 12v6h3v-6" stroke="#5a7a9a" strokeWidth="1.5" /></Icon></Tool>
        <Tool label="3D ビューをロック"><Icon w={21} h={22}><path d="M1 8l6-6 7-1 5 7v3M1 8v10l5 3V9L4 6M19 8l-5-5-7 7v11h5" fill="#e4e7eb" stroke={D} strokeWidth="1.4" /><path d="M10 13h10v8H10z" fill="#cfe9e0" stroke="#38756a" strokeWidth="1.5" /><path d="M13 13v-3h5v2M15 16v3" stroke="#38756a" strokeWidth="1.5" /></Icon></Tool>
        <Tool label="一時的に非表示"><Icon w={21} h={20}><path d="M1 5l4 4M17 1c3 0 3 3 1 5l-4 5" stroke={D} strokeWidth="1.4" /><circle cx="6" cy="10" r="3.5" fill="#dde9f2" stroke={D} strokeWidth="1.4" /><circle cx="12" cy="14" r="4" fill="#bcd7e8" stroke={D} strokeWidth="1.4" /></Icon></Tool>
        <Tool label="拘束を表示"><Icon w={21} h={20}><path d="M1 3h19M3 0v17M18 0v8" stroke={D} strokeWidth="1.6" /><path d="M3 16h8" stroke={D} strokeDasharray="2 1.5" /><path d="M12 11h8v7h-8z" fill="#555" /><path d="M14 11V8h4v3" stroke="#555" strokeWidth="1.5" /></Icon></Tool>
        <Tool label="一時的なビュー プロパティ"><Icon w={21} h={20}><path d="M1 2h19v16H1z" fill="#dde0e5" stroke={D} strokeWidth="1.4" /><path d="M1 12h13M1 15h13" stroke={D} strokeWidth="1.5" /><circle cx="17" cy="7" r="3.5" fill="#cfe4f7" stroke="#6fa7dc" strokeWidth="1.3" /><path d="M16 11h2v7h-2z" fill="#6fa7dc" /></Icon></Tool>
      </div>
      <button aria-label="左へスクロール" className="ml-3"><Chevron d="M7 1L3 5l4 4" /></button>
      <div className="flex h-full flex-1 justify-center"><span className="h-[21px] w-[23px] bg-[#c8c8c8]" /></div>
      <button aria-label="右へスクロール" className="mr-1.5"><Chevron d="M3 1l4 4-4 4" /></button>
      <Icon w={24} h={20}><path d="M15 5h2v2h-2zM11 9h2v2h-2zM15 9h2v2h-2zM7 13h2v2H7zM11 13h2v2h-2zM15 13h2v2h-2z" fill="#b5b5b5" /></Icon>
    </div>
  );
}

function ViewArea() {
  const tab = "flex h-[26px] w-[163px] shrink-0 items-center gap-2.5 pl-1.5 text-[14px] text-[#5a5a5a]";
  return (
    <main className="flex min-w-0 flex-1 flex-col border-r-[3px] border-[#c0c0c0] bg-[#f4f4f4]">
      <div className="flex h-[26px] items-center bg-[#c8c8c8]">
        <button className={tab}><PlanIcon />配置図ビュー</button>
        <button className={tab}><House s={20} mute />ビュー 1</button>
        <button className={tab}><PlanIcon />参照レベル</button>
        <button className={tab}><PlanIcon />基準レベル</button>
        <div className="flex h-[26px] w-[164px] shrink-0 items-center justify-between bg-white pl-2 pr-[7px] text-[15px] text-[#333]">
          <button className="flex items-center gap-2"><House s={20} />{"{3D}"}</button>
          <button aria-label="{3D} を閉じる"><CloseX /></button>
        </div>
        <button aria-label="タブ一覧" className="ml-auto mr-[7px]">
          <Icon w={10} h={9}><path d="M0 1h10" stroke="#222" strokeWidth="1.4" /><path d="M0 4h10L5 9z" fill="#222" /></Icon>
        </button>
      </div>
      <div className="flex min-h-0 flex-1">
        <div className="relative min-w-0 flex-1 bg-white">
          <ModelDrawing />
          <ViewCube />
          <NavBar />
        </div>
        <div className="mr-[3px] flex w-5 flex-col items-center justify-between bg-[#ededed] pb-1.5 pt-2">
          <button aria-label="上へスクロール"><Chevron d="M1 7l4-4 4 4" /></button>
          <span className="h-[21px] w-[19px] bg-[#c8c8c8]" />
          <button aria-label="下へスクロール"><Chevron d="M1 3l4 4 4-4" /></button>
        </div>
      </div>
      <ViewControls />
      <div className="h-0.5 bg-[#f8f8f8]" />
    </main>
  );
}

function GroupRow({ label }: { label: string }) {
  return (
    <tr className="h-[25px] bg-[#d9d9d9]">
      <th colSpan={2} scope="colgroup" className="p-0 text-left font-normal">
        <div className="flex h-[25px] justify-between pl-0.5 pr-[3px]">
          <span className="leading-[26px]">{label}</span>
          <Icon w={5} h={10}><path d="M1 4l1.500-2L4 4M1 7l1.500-2L4 7" stroke="#555" /></Icon>
        </div>
      </th>
    </tr>
  );
}

function CheckRow({ id, label, size = "text-[15px]", checked = false }: { id: string; label: string; size?: string; checked?: boolean }) {
  return (
    <tr className="h-[25px]">
      <th scope="row" className="border-b border-r border-[#dedede] p-0 pl-2 text-left font-normal">
        <label htmlFor={id} className={`block whitespace-nowrap leading-6 ${size}`}>{label}</label>
      </th>
      <td className="border-b border-[#dedede] p-0 pl-0.5">
        <span className="relative block h-4 w-4">
          <input id={id} type="checkbox" defaultChecked={checked} className="peer block h-4 w-4 appearance-none border border-[#444] bg-white" />
          <svg width="16" height="16" viewBox="0 0 16 16" fill="none" className="pointer-events-none absolute left-0 top-0 hidden peer-checked:block" aria-hidden="true">
            <path d="M3 7l4 4 6-7" stroke="#444" strokeWidth="1.2" />
          </svg>
        </span>
      </td>
    </tr>
  );
}

function Properties() {
  const th = "border-r border-[#dedede] p-0 pl-2 text-left font-normal whitespace-nowrap";
  return (
    <aside className="flex w-[320px] shrink-0 flex-col border-x-[3px] border-l-[#e4e4e4] border-r-[#efefef] bg-white text-[15px] text-[#444]">
      <div className="flex h-[27px] items-center justify-between border-b border-[#333] bg-[#ededed] pl-0.5 pr-[3px]">
        <h2 className="text-[13px]">プロパティ</h2>
        <button aria-label="プロパティを閉じる"><CloseX s={13} /></button>
      </div>
      <button aria-label="タイプ セレクタ" className="flex h-[92px] shrink-0 items-center justify-between border-b border-[#777] bg-linear-to-b from-[#f5f5f5] to-[#e2e2e2] pl-1 pr-0.5">
        <span className="flex h-[84px] w-[84px] justify-center border border-[#dadada] bg-[#ededed]">
          <Icon w={76} h={80}>
            <path d="M2 4h30v46H2z" fill="#dcdcdc" /><path d="M32 4h42v54l-42-8z" fill="#efefef" /><path d="M48 44l26 14H50z" fill="#e2e2e2" />
            <path d="M20 10l9-2v52l-9 2z" fill="#8b8b8b" />
            <path d="M27 8h14c12 0 17 6 17 15 0 8-4 13-9 15l16 23H53L40 41h-5v20h-8zM36 18v13h5c5 0 7-3 7-7 0-3-2-6-7-6z" fill="#a6a6a6" fillRule="evenodd" />
            <path d="M40 40l9-2 16 23H53z" fill="#979797" /><path d="M27 8h14c12 0 17 6 17 12-4-6-9-8-17-8H27z" fill="#b8b8b8" />
          </Icon>
        </span>
        <Icon w={9} h={5}><path d="M0 0h9L4.500 5z" fill="#777" /></Icon>
      </button>
      <div className="flex h-[27px] shrink-0 items-end bg-[#ededed] text-[13px]">
        <div className="relative flex-1">
          <select aria-label="ファミリ" className="block h-[26px] w-full appearance-none border border-[#c4c4c4] bg-[#dedede] pl-px">
            <option>ファミリ: 窓</option>
          </select>
          <svg width="9" height="6" viewBox="0 0 9 6" fill="none" className="pointer-events-none absolute right-1.5 top-2.5" aria-hidden="true"><path d="M1 1l3.500 3.500L8 1" stroke="#777" strokeWidth="1.2" /></svg>
        </div>
        <button disabled className="flex h-[26px] w-[84px] items-center gap-0.5 whitespace-nowrap pl-1 text-[#a6a6a6]">
          <Icon w={10} h={10}><path d="M1 1h3v3H1zM6 1h3v3H6zM1 6h8v3H1z" stroke="#a6a6a6" /></Icon>タイプ編集
        </button>
      </div>
      <table className="w-full table-fixed border-separate border-spacing-0">
        <colgroup><col className="w-[158px]" /><col /></colgroup>
        <tbody>
          <GroupRow label="拘束" />
          <tr className="h-[25px] text-[#777]"><th scope="row" className={th}>ホスト</th><td className="p-0 pl-0.5">壁</td></tr>
          <GroupRow label="識別情報" />
          <tr className="h-[25px]">
            <th scope="row" className={th}><label htmlFor="omni">OmniClass 番号</label></th>
            <td className="p-0"><input id="omni" defaultValue="23.30.20.00" className="block h-[25px] w-full border border-[#555] bg-white pl-px" /></td>
          </tr>
          <tr className="h-[25px] text-[#777]"><th scope="row" className={th}>OmniClass タイトル</th><td className="p-0 pl-0.5">Windows</td></tr>
          <GroupRow label="その他" />
          <CheckRow id="vertical" label="常に垂直" checked />
          <CheckRow id="void" label="ロード時にボイドで切り..." size="text-[13px]" />
          <CheckRow id="shared" label="共有" />
          <CheckRow id="room" label="部屋計算ポイント" size="text-[14px]" />
        </tbody>
      </table>
      <div className="mt-auto flex h-[30px] shrink-0 items-start justify-between bg-[#ededed] text-[13px]">
        <a href="#help" className="pl-0.5 leading-[22px] text-[#2a6fd0] underline underline-offset-4">プロパティ ヘルプ</a>
        <button disabled className="h-[26px] w-[98px] bg-[#c6c6c6] text-[15px] text-[#8c8c8c]">適用</button>
      </div>
    </aside>
  );
}

function Arrow() {
  return <path d="M10 7v13l3-3 2.500 5 2.500-1-2.500-5H20z" fill="#fff" stroke="#333" strokeWidth="1.2" />;
}

function StatusBar() {
  return (
    <footer className="flex h-[33px] shrink-0 items-center justify-between bg-[#c8c8c8] pl-0.5 pr-8 text-[14px] text-[#333]">
      <span>押し出し</span>
      <div className="flex items-center gap-[5px]">
        <Tool label="リンクを選択"><Icon w={22} h={24}><rect x="1.5" y="4" width="8" height="6" rx="3" fill="#f6d98a" stroke="#dfa21e" strokeWidth="2.6" /><rect x="11.5" y="4" width="8" height="6" rx="3" fill="#f6d98a" stroke="#dfa21e" strokeWidth="2.6" /><path d="M5 7h11" stroke="#8b5f0a" strokeWidth="1.4" /><Arrow /></Icon></Tool>
        <Tool label="アンダーレイ要素を選択"><Icon w={23} h={24}><path d="M1 14l8-8h7M1 14h13M1 19l5-4M1 19h12" stroke={B} strokeWidth="1.8" fill="#dcecf9" /><path d="M12 2l8 8M20 2l-8 8" stroke="#d9382c" strokeWidth="2.6" /><Arrow /></Icon></Tool>
        <Tool label="ピンされた要素を選択"><Icon w={23} h={24}><path d="M2 2h11v3h-2v5h3v4H1v-4h3V5H2z" fill="#f6a65c" stroke="#c8561c" strokeWidth="1.5" /><path d="M7.500 14v8" stroke="#c8561c" strokeWidth="1.5" /><Arrow /></Icon></Tool>
        <Tool label="面で要素を選択"><Icon w={23} h={24}><path d="M2 6l8-3v14l-8 4z" fill={LB} stroke={B} strokeWidth="1.5" /><path d="M12 2l8 8M20 2l-8 8" stroke="#d9382c" strokeWidth="2.6" /><Arrow /></Icon></Tool>
        <Tool label="選択時に要素をドラッグ"><Icon w={23} h={24}><path d="M1 8h14M8 2v12M6 4l2-2 2 2M6 12l2 2 2-2M3 6L1 8l2 2" stroke="#333" strokeWidth="1.4" /><Arrow /></Icon></Tool>
        <Tool label="バックグラウンド処理"><Icon w={22} h={22}><circle cx="11" cy="11" r="7" stroke="#a4a4a4" strokeWidth="3" /><circle cx="11" cy="11" r="7" stroke="#8f8f8f" strokeWidth="5" strokeDasharray="3.5 2" /></Icon></Tool>
        <button className="flex items-center">
          <Icon w={22} h={22}><path d="M1 2h20l-8 9v9l-4-2v-7z" fill="#dfe3e8" stroke={D} strokeWidth="1.4" /></Icon>:0
        </button>
      </div>
    </footer>
  );
}

export default function App() {
  return (
    <div className="relative overflow-hidden bg-white font-['Open_Sans','Noto_Sans_CJK_JP',sans-serif] [font-feature-settings:'palt']">
      <div className="mx-[110px] flex min-h-screen flex-col">
        <QuickAccess />
        <RibbonTabs />
        <Ribbon />
        <div className="h-8 shrink-0 bg-[#ededed]" />
        <div className="h-0.5 shrink-0 bg-[#c8c8c8]" />
        <div className="flex flex-1">
          <ProjectBrowser />
          <div className="w-[3px] shrink-0 bg-[#d0d0d0]" />
          <ViewArea />
          <Properties />
        </div>
        <StatusBar />
      </div>

      <div className="absolute right-0 top-0 h-[58px] w-[594px] bg-[#142176]/76 pl-[89px] font-['Noto_Sans_CJK_JP',sans-serif] text-[30px] font-bold text-white [font-feature-settings:normal]">
        <p className="whitespace-nowrap leading-[54px]">窓台の上に三角窓を作成します</p>
      </div>
      <p className="absolute left-[488px] top-[430px] whitespace-nowrap font-['Noto_Sans_CJK_JP',sans-serif] text-[61px] font-bold leading-[88px] text-[#ff0000] [font-feature-settings:normal]">
        本当は窓台の上にサッシを作図したいが、
      </p>
      <div className="absolute left-[1097px] top-[781px] whitespace-nowrap font-['Noto_Sans_CJK_JP',sans-serif] text-[61px] font-bold leading-[80px] text-[#ff0000] [font-feature-settings:normal]">
        <p className="flex items-center">
          <svg width="59" height="30" viewBox="0 0 59 30" fill="none" role="img" aria-label="←">
            <path d="M2 17h52M16 5C13 11 8 15 2 17c6 2 11 6 14 12" stroke="#f00" strokeWidth="2" />
          </svg>
          作業面を設定しないと
        </p>
        <p className="pl-[64px]">１FLに作図されてしまう</p>
      </div>
    </div>
  );
}
